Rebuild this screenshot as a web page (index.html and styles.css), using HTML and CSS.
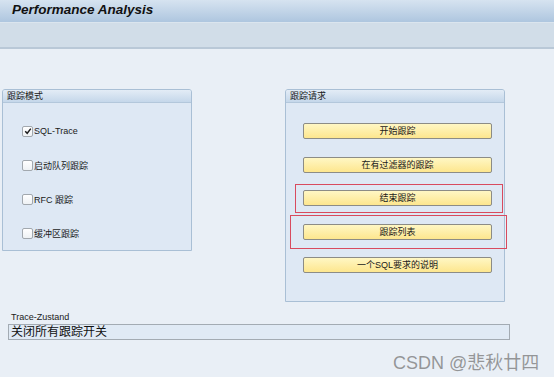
FILE: index.html
```html
<!DOCTYPE html>
<html lang="zh">
<head>
  <meta charset="UTF-8" />
  <title>Performance Analysis</title>
  <link rel="stylesheet" href="styles.css">
</head>
<body>

  <div class="title-bar">
    <h1>Performance Analysis</h1>
  </div>
  <div class="toolbar"></div>

  <main class="screen">
    <div class="groups">
      <section class="group group-mode">
        <div class="group-head">跟踪模式</div>
        <div class="group-body">
          <label class="check">
            <span class="box">
              <svg width="8" height="8" viewBox="0 0 8 8"><path d="M1.2 4.2 L3.2 6.3 L6.8 1.6" fill="none" stroke="#1c1c1c" stroke-width="1.4"/></svg>
            </span>SQL-Trace
          </label>
          <label class="check"><span class="box"></span>启动队列跟踪</label>
          <label class="check"><span class="box"></span>RFC 跟踪</label>
          <label class="check"><span class="box"></span>缓冲区跟踪</label>
        </div>
      </section>

      <section class="group group-request">
        <div class="group-head">跟踪请求</div>
        <div class="group-body">
          <div class="sap-btn">开始跟踪</div>
          <div class="sap-btn">在有过滤器的跟踪</div>
          <div class="sap-btn">结束跟踪</div>
          <div class="sap-btn">跟踪列表</div>
          <div class="sap-btn">一个SQL要求的说明</div>
        </div>
        <!-- red marks drawn over the screenshot -->
        <div class="mark mark-one"></div>
        <div class="mark mark-two"></div>
      </section>
    </div>

    <div class="status">
      <div class="status-label">Trace-Zustand</div>
      <div class="status-field">关闭所有跟踪开关</div>
    </div>

    <div class="watermark">CSDN @悲秋廿四</div>
  </main>

</body>
</html>
```

FILE: styles.css
```css
body {
  margin: 0;
  font-family: 'Liberation Sans', 'Noto Sans CJK SC', sans-serif;
  font-size: 9px;
  color: #1a1a1a;
  background-color: #e9eff6;
  width: 554px;
  height: 377px;
  overflow: hidden;
}

.title-bar {
  height: 22px;
  background: linear-gradient(#d6e3f0, #aec6df);
}

.title-bar h1 {
  margin: 0;
  padding: 2px 0 0 12px;
  font-size: 13.5px;
  font-weight: bold;
  font-style: italic;
  line-height: 16px;
  color: #111;
}

.toolbar {
  height: 24px;
  background-color: #d1dde8;
  border-top: 1px solid #dbe5ee;
  border-bottom: 2px solid #b9c8d7;
}

.screen {
  position: relative;
  height: 329px;
  padding-top: 40px;
  box-sizing: border-box;
}

.groups {
  display: flex;
  align-items: flex-start;
  height: 213px;
}

.group {
  position: relative;
  box-sizing: border-box;
  border: 1px solid #a9bfd5;
  border-radius: 3px 3px 0 0;
  background-color: #dee8f4;
}

.group-mode {
  width: 190px;
  height: 162px;
  margin-left: 2px;
}

.group-request {
  width: 220px;
  height: 213px;
  margin-left: 93px;
}

.group-head {
  height: 12px;
  line-height: 12px;
  padding-left: 4px;
  background: linear-gradient(#e3ecf6, #c5d7ea);
  border-bottom: 1px solid #b3c7db;
  border-radius: 2px 2px 0 0;
  color: #1a1a1a;
}

.group-mode .group-body {
  padding: 11px 0 0 19px;
}

.check {
  display: flex;
  align-items: center;
  height: 34px;
  gap: 1px;
}

.box {
  display: flex;
  align-items: center;
  justify-content: center;
  width: 9px;
  height: 9px;
  border: 1px solid #a2a8ae;
  border-radius: 2px;
  background: linear-gradient(#ffffff, #eef1f4);
}

.group-request .group-body {
  display: flex;
  flex-direction: column;
  gap: 17.6px;
  padding: 20px 0 0 17px;
}

.sap-btn {
  width: 189px;
  height: 16px;
  box-sizing: border-box;
  text-align: center;
  line-height: 14px;
  color: #1a1a1a;
  background: linear-gradient(#fff7c4, #fde68e);
  border: 1px solid #8c8c86;
  border-radius: 2px;
}

.mark {
  position: absolute;
  border: 1px solid #d84a5e;
  box-sizing: border-box;
}

.mark-one {
  left: 9px;
  top: 94px;
  width: 208px;
  height: 29px;
}

.mark-two {
  left: 4px;
  top: 125px;
  width: 217px;
  height: 34px;
}

.status {
  padding: 9px 0 0 8px;
}

.status-label {
  height: 13px;
  line-height: 13px;
  padding-left: 3px;
}

.status-field {
  width: 502px;
  height: 16px;
  box-sizing: border-box;
  border: 1px solid #a3abb3;
  background-color: #e0eaf5;
  padding-left: 2px;
  font-size: 12px;
  line-height: 14px;
  color: #111;
}

.watermark {
  position: absolute;
  left: 393px;
  top: 299px;
  font-size: 18px;
  color: rgba(120, 120, 120, 0.75);
}
```
